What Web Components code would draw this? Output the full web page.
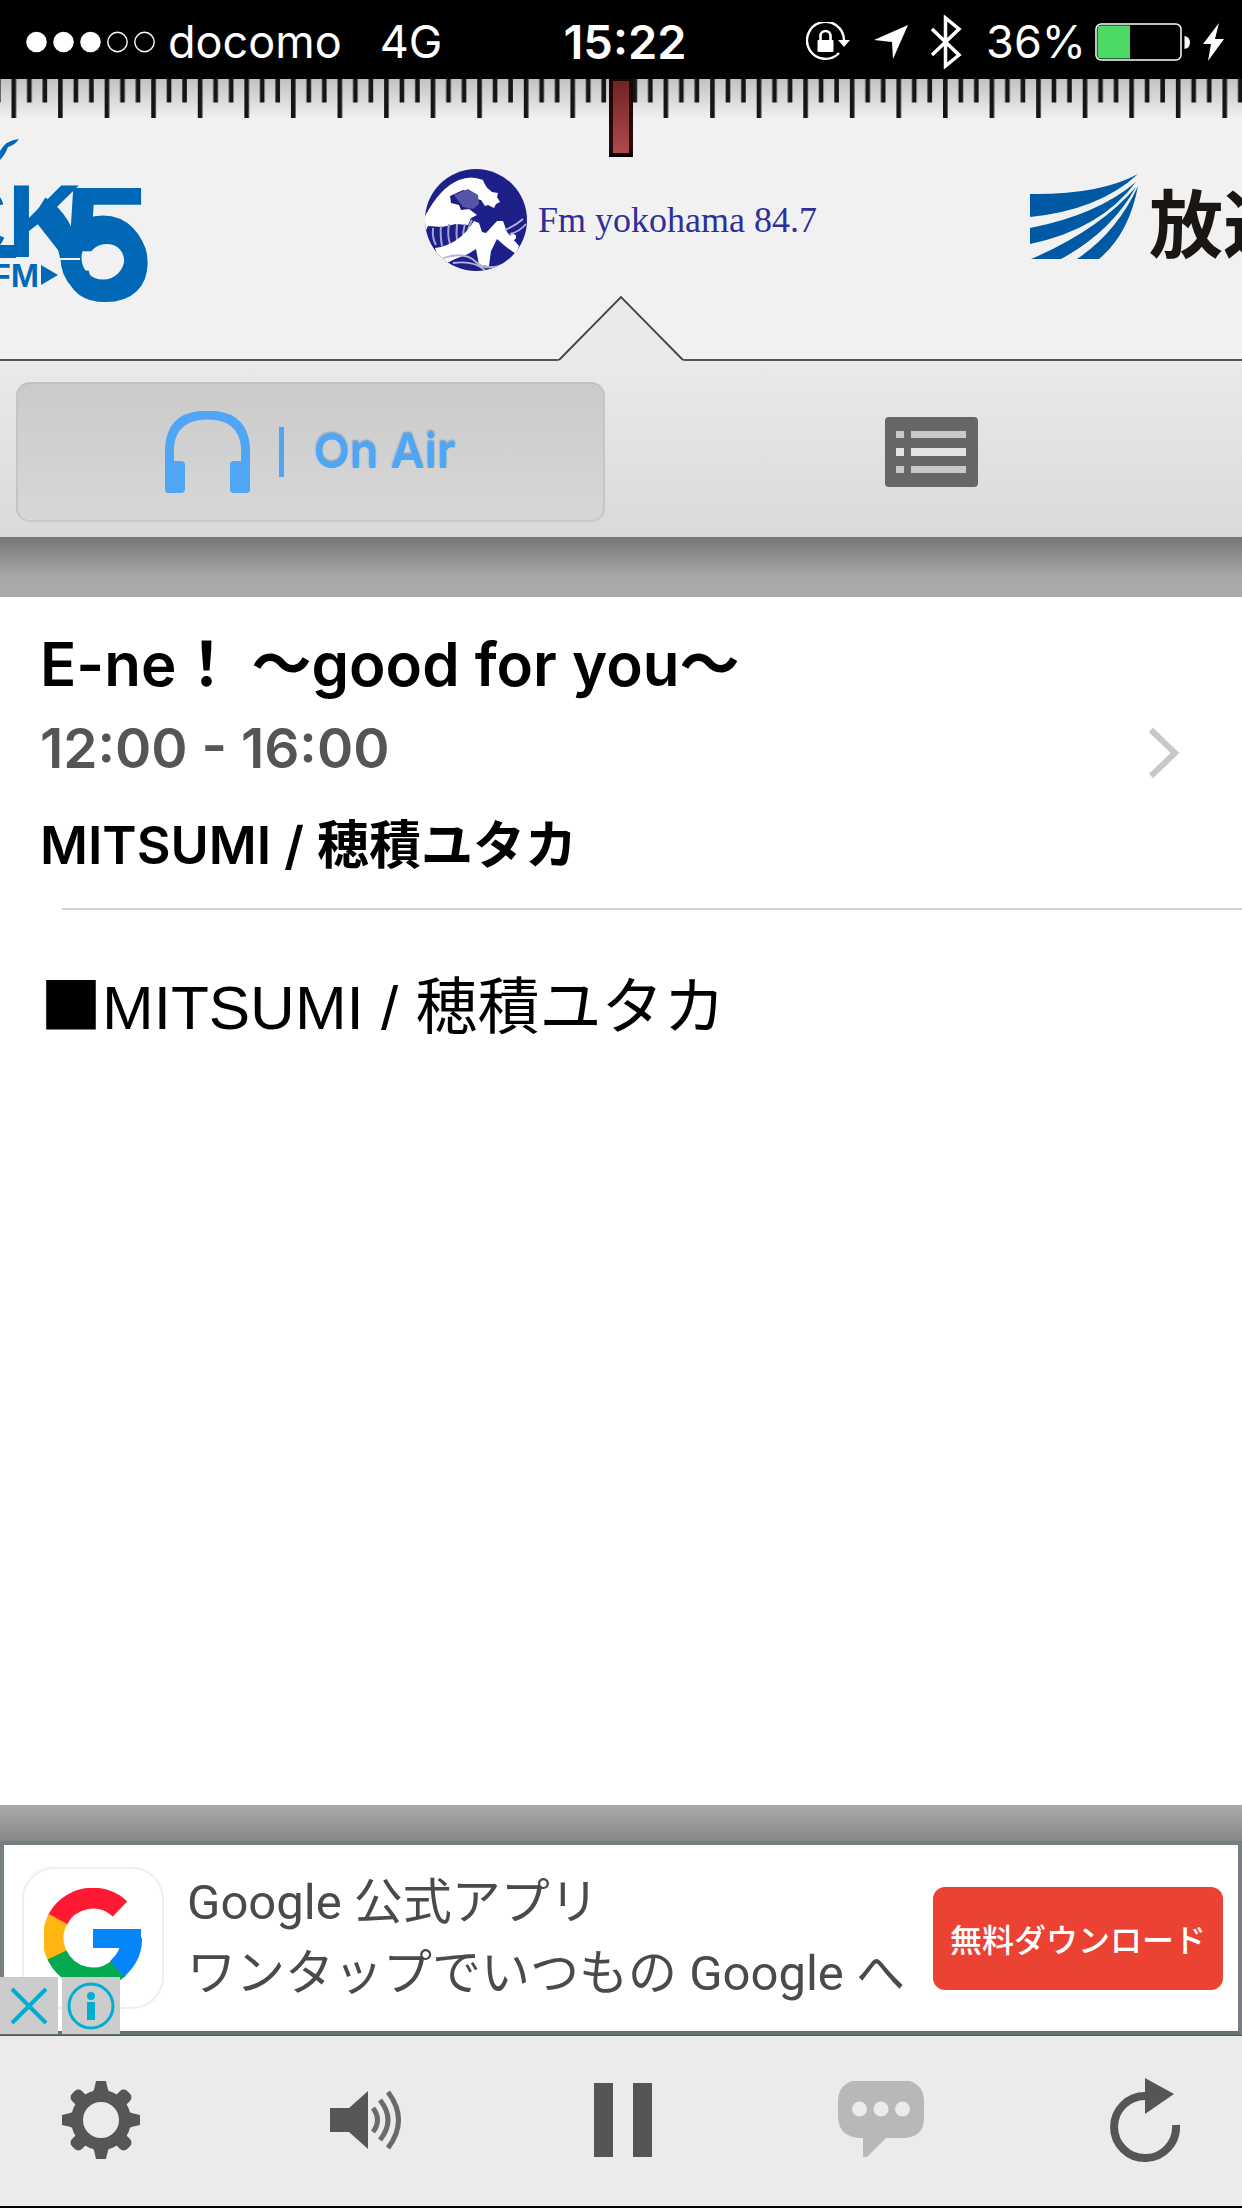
<!DOCTYPE html>
<html lang="ja">
<head>
<meta charset="utf-8">
<meta name="viewport" content="width=device-width, initial-scale=1">
<title>Radio</title>
<style>
html, body { margin: 0; height: 100%; }
body { font-family: Inter, "Noto Sans CJK JP", sans-serif; background: #a9a9a9; color: #000; }
</style>
</head>
<body>
<radio-app></radio-app>
<script>
const define = (name, html) => {
  const t = document.createElement('template');
  t.innerHTML = html;
  customElements.define(name, class extends HTMLElement {
    constructor() {
      super();
      this.attachShadow({ mode: 'open' }).append(t.content.cloneNode(true));
    }
  });
};

define('status-bar', `
<style>
:host { display: grid; grid-template-columns: 1fr auto 1fr; align-items: center; height: 79px; padding: 5px 18px 0 26px; box-sizing: border-box; background: #000; color: #fff; font-size: 45px; line-height: 48px; white-space: nowrap; }
.left, .right { display: flex; align-items: center; }
.left { gap: 24px; }
.net { margin-left: 14px; }
.right { justify-content: flex-end; }
.dots { margin-right: -12px; }
b { font-size: 47px; font-weight: 600; }
svg { display: block; flex: none; }
.lock { margin-right: 24px; } .loc { margin-right: 22px; } .bt { margin-right: 24px; } .bat { margin: 0 13px 0 9px; }
</style>
<div class="left">
  <svg class="dots" width="130" height="24" viewBox="0 0 130 24" fill="#fff"><circle cx="10.500" cy="12" r="10.300"/><circle cx="37.500" cy="12" r="10.300"/><circle cx="64.500" cy="12" r="10.300"/><g fill="none" stroke="#fff" stroke-width="1.400"><circle cx="91.500" cy="12" r="9.700"/><circle cx="118.500" cy="12" r="9.700"/></g></svg>
  <span>docomo</span><span class="net">4G</span>
</div>
<b>15:22</b>
<div class="right">
  <svg class="lock" width="44" height="40" viewBox="0 0 44 40"><path d="M33 31A18.500 18.500 0 1 1 38 18" fill="none" stroke="#fff" stroke-width="2.400"/><path d="M32 18h12l-6 7z" fill="#fff"/><rect x="11.500" y="18" width="16" height="12" rx="1" fill="#fff"/><path d="M14.500 19v-5a5 5 0 0 1 10 0v5" fill="none" stroke="#fff" stroke-width="2.600"/></svg>
  <svg class="loc" width="34" height="36" viewBox="0 0 34 36"><path d="M34 1L19 35l-1-17L0 16z" fill="#fff"/></svg>
  <svg class="bt" width="32" height="54" viewBox="0 0 32 54"><path d="M2 14l27 26-13.500 11V3L29 14 2 40" fill="none" stroke="#fff" stroke-width="3.500"/></svg>
  <span>36%</span>
  <svg class="bat" width="95" height="38" viewBox="0 0 95 38"><rect x="1" y="1" width="85" height="36" rx="5" fill="none" stroke="#fff" stroke-width="1.500"/><path d="M5 2.500h30v33H5q-2.500 0-2.500-3v-27q0-3 2.500-3z" fill="#4cd964"/><path d="M89.500 13q5.500 1 5.500 6.500T89.500 26z" fill="#fff"/></svg>
  <svg width="21" height="38" viewBox="0 0 21 38"><path d="M16 0L0 21h8L5 38 21 16h-9z" fill="#fff"/></svg>
</div>`);

define('station-tuner', `
<style>
:host { display: block; position: relative; height: 282px; box-sizing: border-box; border-bottom: 2px solid #555; background: #f1f1f1; }
.ruler { display: block; width: 100%; height: 40px; background: linear-gradient(#c2c2c2, #dedede 60%, #f1f1f1); }
.needle { position: absolute; top: 0; left: 50%; margin-left: -12px; width: 24px; height: 78px; box-sizing: border-box; border: 4px solid #0e0202; border-top-width: 2px; border-image: linear-gradient(#1a0505, #2b0b0b 90%, #000) 4; background: linear-gradient(#6f2424, #b04a4c); }
.pointer { position: absolute; left: 50%; bottom: -2px; margin-left: -63px; display: block; }
.stations { display: grid; grid-template-columns: minmax(0, 1fr) auto minmax(0, 1fr); align-items: center; height: 202px; margin-bottom: -2px; overflow: hidden; }
a { display: flex; align-items: center; color: #2f2f98; text-decoration: none; white-space: nowrap; }
svg { display: block; flex: none; }
.fm { gap: 10px; font: 36px "Liberation Serif", serif; }
.next { margin-left: 212px; gap: 8px; color: #1a1613; font: 700 74px/80px "Noto Sans CJK JP", sans-serif; }
</style>
<svg class="ruler" viewBox="0 0 1242 40" preserveAspectRatio="none"><defs><pattern id="t" x="11.500" width="46.575" height="40" patternUnits="userSpaceOnUse"><path d="M0 0h4.600v39H0zM15.525 0h4.600v23.500h-4.600zM31.050 0h4.600v23.500h-4.600z" fill="#151515"/></pattern></defs><rect width="1242" height="40" fill="url(#t)"/></svg>
<div class="stations">
  <a href="#prev" aria-label="TRACK5 FM">
    <svg width="148" height="202" viewBox="0 119 148 202" fill="#0068b7" font-family="Liberation Sans, sans-serif" font-weight="700">
      <path d="M0 151q6-11 19-12-4 6-11 8-3 8-8 13z"/>
      <path d="M0 245h16v13H0z"/>
      <path d="M40 206q25 16 30 52" fill="none" stroke="#0068b7" stroke-width="20"/>
      <circle cx="103" cy="258" r="32" fill="none" stroke="#0068b7" stroke-width="21"/>
      <text x="-68" y="257" font-size="104">CK<tspan x="61" y="300" font-size="164">5</tspan><tspan x="-10" y="287" font-size="34">FM</tspan></text>
      <path d="M59 259h21" stroke="#f1f1f1" stroke-width="2"/>
      <path d="M41 265l17 10-17 10z"/>
    </svg>
  </a>
  <a class="fm" href="#fm-yokohama">
    <svg width="103" height="104" viewBox="0 0 103 104"><clipPath id="c"><circle cx="51" cy="52" r="51"/></clipPath><g clip-path="url(#c)"><rect width="102" height="104" fill="#1d2088"/>
      <path d="M-2 52Q14 20 34 12q12-5 24 0 2 7 9 12l6 1-1 4 3 5-4 2-2 4-6-3-3 1-4-6-5-1-4-6-9-3-13 6 1 7 8 2 2 5 8-1 8 6-6 3-3 7-12-1-14 3-14-1-5 10z" fill="#fff"/>
      <path d="M29 27l14-6 10 6 1 9-6 5-10-2z" fill="#5555a6"/>
      <g fill="none" stroke="#a3a3cf" stroke-width="2"><path d="M8 60q-1 10 3 17M16 58q-1 9 1 20M24 56q-2 11 1 20M32 56q-1 9 0 17M40 56q-2 7-2 13M47 52q-3 6-4 10"/></g>
      <path d="M10 80q24-3 39-27l5 2 3 9 4 1 11-12 6 0 4 11 12 14-3 8-11-8-8-7-6 12-2 15-10-1-3-16-8 5-13 5-14 7z" fill="#fff"/>
      <g fill="none" stroke="#b5b5da" stroke-width="1.800"><path d="M85 66q9-2 16-10M80 62q10-4 18-11M18 90q22-7 33 4t36-1M28 95q20-3 32 7"/></g><circle cx="88" cy="69" r="3" fill="#fff"/>
    </g></svg>
    <span>Fm yokohama 84.7</span>
  </a>
  <a class="next" href="#next">
    <svg width="112" height="92" viewBox="0 2 112 92" fill="#0059a5"><path d="M1 22Q70 23 109 2 70 38 1 45zM1 56Q68 43 107 10 72 57 1 72zM2 87Q70 58 107 15 82 60 32 87zM48 87Q88 60 109 14 100 62 70 87z"/></svg>
    <span>放送</span>
  </a>
</div>
<div class="needle"></div>
<svg class="pointer" width="126" height="66" viewBox="0 0 126 66"><path d="M0 66L2 64 63 2l61 62 2 2z" fill="#eaeaea"/><path d="M1 65L63 2l62 63" fill="none" stroke="#444" stroke-width="1.800"/></svg>`);

define('view-tabs', `
<style>
:host { display: grid; grid-template-columns: 1fr 1fr; padding: 21px 0 15px; background: linear-gradient(#eaeaea, #dadada); }
button { display: flex; align-items: center; justify-content: center; height: 140px; margin: 0 16px; padding: 0; border: 2px solid transparent; border-radius: 14px; background: none; }
.on { gap: 29px; border-color: #c1c1c1 #c5c5c5 #c9c9c9; background: linear-gradient(#cbcbcb, #d7d7d7); color: #4ea6f5; font: 600 47px/56px Inter, sans-serif; text-shadow: 0 -2px 2px #6f9fc4; }
.on span { padding-bottom: 2px; }
i { width: 5px; height: 50px; background: #4ea6f5; }
svg { display: block; }
</style>
<button class="on" aria-pressed="true"><svg width="85" height="82" viewBox="0 0 85 82"><path d="M4.500 55V36Q7 4 42.500 4T80.500 36v19" fill="none" stroke="#4ea6f5" stroke-width="9"/><path d="M0 50h16q4 0 4 4v24q0 4-4 4H3q-3 0-3-4zM85 50H69q-4 0-4 4v24q0 4 4 4h13q3 0 3-4z" fill="#4ea6f5"/></svg><i></i><span>On Air</span></button>
<button aria-label="Program list"><svg width="93" height="70" viewBox="0 0 93 70"><rect width="93" height="70" rx="4" fill="#666"/><g fill="#e3e3e3"><path d="M11 31h8v8h-8zM26 31h55v8H26z"/><path d="M11 14h8v7h-8zM26 14h55v7H26zM11 49h8v7h-8zM26 49h55v7H26z" fill="#c8c8c8"/></g></svg></button>`);

define('program-row', `
<style>
:host { display: block; }
a { display: flex; align-items: center; justify-content: space-between; padding: 27px 62px 9px 40px; color: #000; text-decoration: none; font-weight: 600; }
a > div { display: grid; }
.title { font-size: 60px; line-height: 80px; }
.time { font-size: 55px; line-height: 88px; color: #555; }
.cast { font-size: 52px; line-height: 107px; }
svg { display: block; margin-bottom: 18px; }
hr { margin: 0 0 0 62px; border: 0; border-top: 2px solid #d3d2d6; }
</style>
<a href="#program"><div><span class="title"><slot name="title"></slot></span><span class="time"><slot name="time"></slot></span><span class="cast"><slot name="cast"></slot></span></div>
<svg width="32" height="52" viewBox="0 0 32 52"><path d="M3 3l24 23L3 49" fill="none" stroke="#c7c7cc" stroke-width="6"/></svg></a>
<hr>`);

define('program-note', `
<style>
:host { display: block; padding: 54px 40px; font: 62px/88px "Liberation Sans", "Noto Sans CJK JP", sans-serif; }
p { margin: 0; }
span { font-family: "Noto Sans CJK JP", sans-serif; line-height: 1; }
</style>
<p><span>■</span><slot></slot></p>`);

define('ad-banner', `
<style>
:host { display: flex; align-items: center; position: relative; height: 194px; box-sizing: border-box; border: 4px solid #757f82; border-bottom-color: #667174; background: #fff; padding: 0 15px 0 18px; }
.app { flex: none; display: grid; place-items: center; width: 142px; height: 142px; box-sizing: border-box; border: 2px solid #efefef; border-radius: 32px; }
p { flex: 1; margin: 0 0 0 23px; font: 49px/71px Roboto, "Noto Sans CJK JP", sans-serif; color: #4c4948; white-space: nowrap; }
.get { flex: none; width: 290px; height: 103px; padding: 0; border: 0; border-radius: 12px; background: #ec4234; color: #fff; font: 500 32px/40px "Noto Sans CJK JP", sans-serif; }
.marks { position: absolute; left: -4px; bottom: -3px; display: flex; gap: 4px; }
.marks button { width: 58px; height: 57px; padding: 0; border: 0; background: #ccc; }
svg { display: block; }
</style>
<div class="app"><svg width="98" height="100" viewBox="0 0 98 100" fill="none" stroke-width="21"><path d="M13 33A39.500 39.500 0 0 1 76 21" stroke="#ff1a34"/><path d="M14 31a40 40 0 0 0 0 38" stroke="#ffb612"/><path d="M13 67a39.500 39.500 0 0 0 62 13" stroke="#04a950"/><path d="M73 81Q88 68 87.500 50" stroke="#0486fa"/><path d="M49 41h48v19H49z" fill="#0486fa"/></svg></div>
<p>Google 公式アプリ<br>ワンタップでいつもの Google へ</p>
<button class="get">無料ダウンロード</button>
<div class="marks">
<button aria-label="Close ad"><svg width="58" height="57" viewBox="0 0 58 57"><path d="M12 12l34 34M46 12L12 46" stroke="#00aed4" stroke-width="4"/></svg></button>
<button aria-label="Ad information"><svg width="58" height="57" viewBox="0 0 58 57"><circle cx="29" cy="29" r="22" fill="none" stroke="#00aed4" stroke-width="3"/><circle cx="29" cy="19" r="4" fill="#00aed4"/><path d="M29 25v18" stroke="#00aed4" stroke-width="8"/></svg></button>
</div>`);

const teeth = [0, 90, 180, 270].map(a => `<path d="M29 15Q33 8 34 0h10q1 8 5 15z" transform="rotate(${a} 39 39)"/>`).join('') +
  [45, 135, 225, 315].map(a => `<rect x="32" y="0" width="14" height="16" rx="5" transform="rotate(${a} 39 39)"/>`).join('');
define('player-bar', `
<style>
:host { display: flex; align-items: center; justify-content: space-between; height: 173px; box-sizing: border-box; padding: 0 62px 2px; background: #ebebeb; border-top: 1px solid #555; border-bottom: 2px solid #000; }
button { padding: 0; border: 0; background: none; }
svg { display: block; }
</style>
<button aria-label="Settings"><svg width="78" height="78" viewBox="0 0 78 78" fill="#565656">${teeth}<circle cx="39" cy="39" r="24" fill="none" stroke="#565656" stroke-width="12"/></svg></button>
<button aria-label="Volume"><svg width="76" height="58" viewBox="0 0 76 58"><path d="M4 17h19L42 0v58L23 41H4z" fill="#565656"/><g fill="none" stroke="#6a6a6a" stroke-width="5"><path d="M47 17q9 12 0 24M54 9q16 20 0 40M62 1q21 28 0 56"/></g></svg></button>
<button aria-label="Pause"><svg width="64" height="74" viewBox="0 0 64 74"><path d="M6 0h19v74H6zM45 0h19v74H45z" fill="#555"/></svg></button>
<button aria-label="Comments"><svg width="86" height="78" viewBox="0 0 86 78"><path d="M14 0h58q14 5 14 20v17q0 20-22 20H48L29 76h-4V57q-25 0-25-22V20Q0 5 14 0z" fill="#b8b8b8"/><g fill="#ebebeb"><circle cx="21.500" cy="28" r="7.500"/><circle cx="43" cy="28" r="7.500"/><circle cx="64.500" cy="28" r="7.500"/></g></svg></button>
<button aria-label="Reload"><svg width="70" height="84" viewBox="0 0 70 84"><path d="M36 18A31 31 0 1 0 66 47" fill="none" stroke="#555" stroke-width="8"/><path d="M35 0l29 16-29 20z" fill="#555"/></svg></button>`);

define('radio-app', `
<style>
:host { display: flex; flex-direction: column; min-height: 100vh; }
main { flex: 1; display: flex; flex-direction: column; background: #fff; }
.shade { height: 60px; background: linear-gradient(#767676, #a9a9a9 40px); }
.shade.low { height: 36px; background: linear-gradient(#aaa, #888); }
</style>
<status-bar></status-bar>
<station-tuner></station-tuner>
<view-tabs></view-tabs>
<div class="shade"></div>
<main>
  <program-row><span slot="title">E-ne！ 〜good for you〜</span><span slot="time">12:00 - 16:00</span><span slot="cast">MITSUMI / 穂積ユタカ</span></program-row>
  <program-note>MITSUMI / 穂積ユタカ</program-note>
</main>
<div class="shade low"></div>
<ad-banner></ad-banner>
<player-bar></player-bar>`);
</script>
</body>
</html>
